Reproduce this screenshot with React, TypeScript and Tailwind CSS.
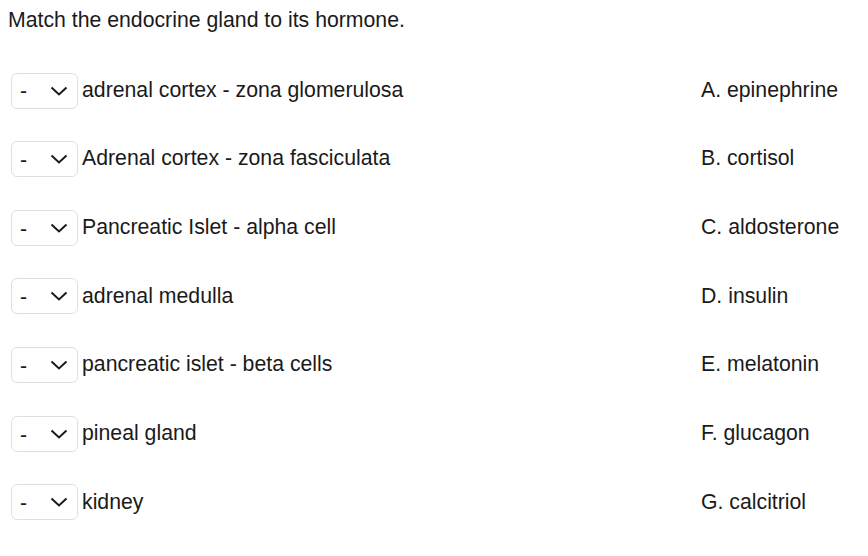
const rows = [
  { stem: 'adrenal cortex - zona glomerulosa', answer: 'A. epinephrine' },
  { stem: 'Adrenal cortex - zona fasciculata', answer: 'B. cortisol' },
  { stem: 'Pancreatic Islet - alpha cell', answer: 'C. aldosterone' },
  { stem: 'adrenal medulla', answer: 'D. insulin' },
  { stem: 'pancreatic islet - beta cells', answer: 'E. melatonin' },
  { stem: 'pineal gland', answer: 'F. glucagon' },
  { stem: 'kidney', answer: 'G. calcitriol' },
]

function Chevron() {
  return (
    <svg width="18" height="10" viewBox="0 0 18 10" className="shrink-0">
      <path d="M1.5 1.5 L9 8.5 L16.5 1.5" fill="none" stroke="#1a1a1a" strokeWidth="2" />
    </svg>
  )
}

export default function App() {
  return (
    <div className="w-[868px] h-[556px] bg-white text-[21.25px] text-[#1a1a1a] font-['Liberation_Sans',Arial,sans-serif]">
      <div className="pl-2 pt-[7px] leading-[26px]">Match the endocrine gland to its hormone.</div>
      <div className="mt-[40px] flex flex-col gap-[33.67px]">
        {rows.map(r => (
          <div key={r.stem} className="flex items-center h-[35px]">
            <div className="flex items-center w-[1px] flex-1 pl-[11px]">
              <div className="w-[67px] h-[36px] border border-[#e0e0e0] rounded-[6px] flex items-center justify-between pl-[8px] pr-[9px]">
                <span className="leading-none pt-[3px]">-</span>
                <Chevron />
              </div>
              <span className="ml-[4px]">{r.stem}</span>
            </div>
            <div className="w-[167px]">{r.answer}</div>
          </div>
        ))}
      </div>
    </div>
  )
}
